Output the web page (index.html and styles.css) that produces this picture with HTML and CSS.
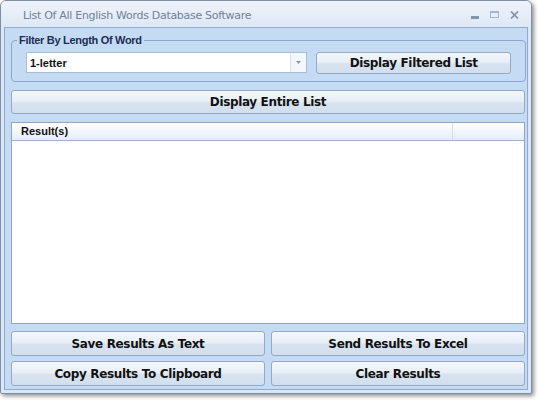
FILE: index.html
```html
<!DOCTYPE html>
<html>
<head>
<meta charset="utf-8">
<link rel="stylesheet" href="styles.css">
</head>
<body>
<div class="window">
  <div class="titlebar">
    <span class="title">List Of All English Words Database Software</span>
    <div class="controls">
      <span class="ctl min"></span>
      <span class="ctl max"></span>
      <span class="ctl close">
        <svg width="9" height="8" viewBox="0 0 9 8"><path d="M1 0.5 L8 7.5 M8 0.5 L1 7.5" stroke="#8494a9" stroke-width="1.7"/></svg>
      </span>
    </div>
  </div>
  <div class="client">
    <div class="group">
      <div class="legend">Filter By Length Of Word</div>
      <div class="group-row">
        <div class="combo">
          <span class="combo-text">1-letter</span>
          <span class="combo-arrow"><svg width="5" height="3" viewBox="0 0 5 3"><path d="M0 0 H5 L2.5 3 Z" fill="#8a97a8"/></svg></span>
        </div>
        <button class="btn btn-filter">Display Filtered List</button>
      </div>
    </div>
    <button class="btn btn-wide">Display Entire List</button>
    <div class="list">
      <div class="list-head">
        <span class="col col-main">Result(s)</span>
        <span class="col col-rest"></span>
      </div>
      <div class="list-body"></div>
    </div>
    <div class="btn-grid">
      <button class="btn">Save Results As Text</button>
      <button class="btn">Send Results To Excel</button>
      <button class="btn">Copy Results To Clipboard</button>
      <button class="btn">Clear Results</button>
    </div>
  </div>
</div>
</body>
</html>
```
FILE: styles.css
```css
* { box-sizing: border-box; }
html, body { margin: 0; padding: 0; background: #ffffff; }
body { width: 540px; height: 401px; overflow: hidden; font-family: "Liberation Sans", Arial, sans-serif; }

.window {
  width: 532px;
  height: 394px;
  border: 1px solid #7d8ea5;
  border-radius: 6px 6px 2px 2px;
  background: #d9e7f7;
  box-shadow: 2px 2px 4px rgba(0,0,0,0.45);
  padding: 0 3px 3px 3px;
  display: flex;
  flex-direction: column;
}

.titlebar {
  height: 26px;
  flex: none;
  display: flex;
  align-items: center;
  justify-content: space-between;
  background: linear-gradient(#eef3fa, #dde8f6);
  margin: 0 -3px;
  padding: 0 12px 0 22px;
  border-radius: 5px 5px 0 0;
}
.title {
  font-family: "DejaVu Sans", Verdana, sans-serif;
  font-size: 11px;
  color: #728196;
  letter-spacing: -0.3px;
  padding-top: 2px;
}
.controls { display: flex; align-items: center; gap: 11px; padding-top: 1px; }
.ctl { display: block; position: relative; }
.min { width: 8px; height: 3px; background: #8494a9; margin-top: 5px; }
.max { width: 9px; height: 7px; border: 1px solid #a8b5c6; border-top-width: 2px; }
.close { width: 9px; height: 8px; }
.close svg { display: block; }

.client {
  flex: 1;
  background: #c5dbf4;
  border: 1px solid #93abc9;
  padding: 6px 3px 0 6px;
  display: flex;
  flex-direction: column;
}

.group {
  position: relative;
  margin: 6px 0 0 0;
  width: 515px;
  height: 42px;
  border: 1px solid #8ea8c9;
  border-radius: 4px;
  padding: 11px 14px 0 14px;
}
.legend {
  position: absolute;
  left: 5px;
  top: -7px;
  padding: 0 2px;
  background: #c5dbf4;
  font-size: 11px;
  font-weight: bold;
  color: #1b2f52;
  line-height: 12px;
  letter-spacing: -0.3px;
}
.group-row { display: flex; align-items: flex-start; gap: 9px; }

.combo {
  width: 282px;
  height: 21px;
  background: #ffffff;
  border: 1px solid #a9bdd6;
  display: flex;
  align-items: center;
  justify-content: space-between;
}
.combo-text {
  font-size: 11px;
  font-weight: bold;
  color: #111;
  padding-left: 3px;
}
.combo-arrow {
  width: 16px;
  height: 19px;
  border-left: 1px solid #dbe3ee;
  display: flex;
  align-items: center;
  justify-content: center;
  background: #f4f7fb;
}
.combo-arrow svg { display: block; }

.btn {
  font-family: "DejaVu Sans", Verdana, sans-serif;
  font-size: 12px;
  font-weight: bold;
  color: #111;
  border: 1px solid #92a9c7;
  border-radius: 3px;
  background: linear-gradient(#f3f7fb 0%, #e9eff7 45%, #d8e3f0 55%, #d1deed 100%);
  padding: 0;
  margin: 0;
  letter-spacing: -0.35px;
  cursor: default;
}
.btn-filter { width: 195px; height: 22px; }
.btn-wide { width: 514px; height: 24px; margin-top: 8px; }

.list {
  margin-top: 8px;
  width: 514px;
  height: 202px;
  border: 1px solid #8ea5c3;
  background: #ffffff;
  display: flex;
  flex-direction: column;
}
.list-head {
  height: 18px;
  display: flex;
  background: linear-gradient(#ffffff, #e4edf9);
  border-bottom: 1px solid #9eb3cd;
}
.col {
  font-size: 11px;
  font-weight: bold;
  color: #111;
  line-height: 17px;
}
.col-main { width: 441px; padding-left: 9px; border-right: 1px solid #d4dce7; }
.col-rest { flex: 1; }
.list-body { flex: 1; }

.btn-grid {
  margin-top: 7px;
  width: 514px;
  display: grid;
  grid-template-columns: 254px 254px;
  column-gap: 6px;
  row-gap: 5px;
}
.btn-grid .btn { height: 25px; }
```
